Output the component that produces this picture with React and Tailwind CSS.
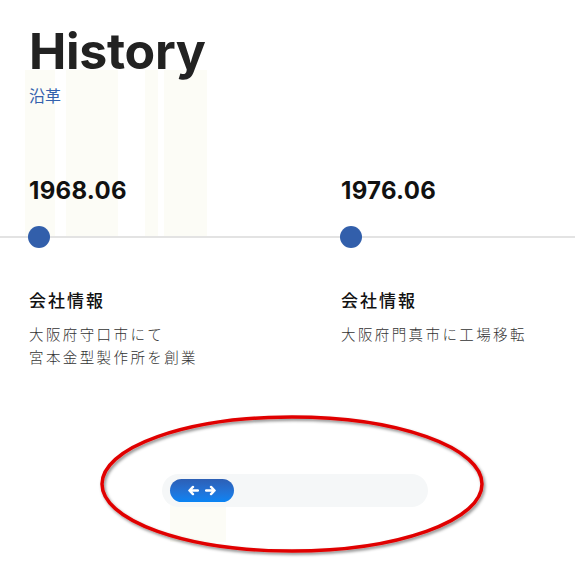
import React from "react";

const items = [
  { date: "1968.06", title: "会社情報", text: ["大阪府守口市にて", "宮本金型製作所を創業"] },
  { date: "1976.06", title: "会社情報", text: ["大阪府門真市に工場移転"] },
];

const jp = { fontFamily: '"Noto Sans CJK JP", "Noto Sans", sans-serif' };

const App = () => {
  return (
    <div className="relative w-[575px] h-[577px] overflow-hidden bg-white font-['Inter',sans-serif]">
      {/* faint background stripes */}
      <div className="absolute left-[25px] top-[70px] flex h-[167px] gap-0">
        <div className="w-[30px] bg-[#fcfcf6]" />
        <div className="ml-[11px] w-[52px] bg-[#fcfcf6]" />
        <div className="ml-[27px] w-[13px] bg-[#fcfcf6]" />
        <div className="ml-[6px] w-[43px] bg-[#fcfcf6]" />
      </div>
      <div className="absolute left-[170px] top-[505px] w-[56px] h-[37px] bg-[#fcfcf6]" />

      <div className="relative pt-[26px]">
        <div className="pl-[29px]">
          <h1 className="text-[50px] font-bold leading-none text-[#222] tracking-[-0.3px]">History</h1>
          <p className="mt-[7px] text-[16px] leading-[24px] text-[#3361ae]" style={jp}>
            沿革
          </p>
        </div>

        <div className="mt-[72px] flex pl-[29px]">
          {items.map((it) => (
            <div key={it.date} className="w-[312px] shrink-0">
              <p className="text-[24px] font-bold leading-none tracking-[0.3px] text-[#111]">{it.date}</p>
            </div>
          ))}
        </div>

        <div className="mt-[33px] flex h-[2px] items-center bg-[#e3e3e3] pl-[28px]">
          {items.map((it) => (
            <div key={it.date} className="w-[312px] shrink-0">
              <div className="h-[22px] w-[22px] rounded-full bg-[#325fab]" />
            </div>
          ))}
        </div>

        <div className="mt-[50px] flex pl-[29px]" style={jp}>
          {items.map((it) => (
            <div key={it.date} className="w-[312px] shrink-0">
              <p className="text-[17px] font-medium leading-[24px] tracking-[2px] text-[#111]">{it.title}</p>
              <div className="mt-[10px] text-[14.5px] font-light leading-[23px] tracking-[2.4px] text-[#333]">
                {it.text.map((t) => (
                  <p key={t}>{t}</p>
                ))}
              </div>
            </div>
          ))}
        </div>

        <div className="mt-[106px] ml-[162px] flex h-[33px] w-[266px] items-center rounded-full bg-[#f5f7f8] pl-[8px]">
          <div className="flex h-[23px] w-[64px] items-center justify-center gap-[6px] rounded-full bg-gradient-to-b from-[#2c5fb5] to-[#0784f4]">
            <svg width="11" height="11" viewBox="0 0 10 10" fill="none" stroke="white" strokeWidth="2.2" strokeLinecap="round" strokeLinejoin="round">
              <path d="M9 5H1.5M4.5 1.8L1.3 5l3.2 3.2" />
            </svg>
            <svg width="11" height="11" viewBox="0 0 10 10" fill="none" stroke="white" strokeWidth="2.2" strokeLinecap="round" strokeLinejoin="round">
              <path d="M1 5h7.5M5.5 1.8L8.7 5 5.5 8.2" />
            </svg>
          </div>
        </div>
      </div>

      {/* red annotation ellipse */}
      <svg className="absolute left-0 top-0 pointer-events-none" width="575" height="577">
        <defs>
          <filter id="sh" x="-10%" y="-20%" width="120%" height="140%">
            <feDropShadow dx="1.5" dy="2" stdDeviation="1.5" floodColor="#000" floodOpacity="0.45" />
          </filter>
        </defs>
        <ellipse cx="292" cy="484" rx="190" ry="67" fill="none" stroke="#e00000" strokeWidth="3.5" filter="url(#sh)" />
      </svg>
    </div>
  );
};

export default App;
